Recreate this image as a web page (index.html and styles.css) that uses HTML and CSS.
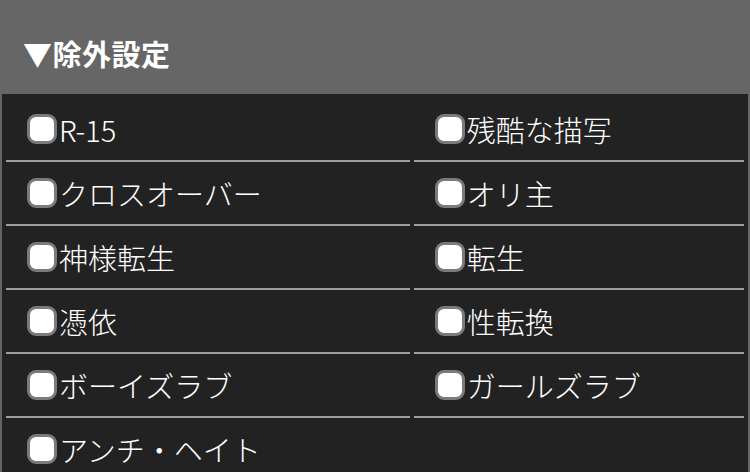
FILE: index.html
```html
<!DOCTYPE html>
<html lang="ja">
<head>
<meta charset="utf-8">
<link rel="stylesheet" href="styles.css">
</head>
<body>
<div class="header">▼除外設定</div>
<div class="panel">
  <label class="row"><input type="checkbox" class="box"><span>R-15</span></label>
  <label class="row"><input type="checkbox" class="box"><span>残酷な描写</span></label>
  <label class="row"><input type="checkbox" class="box"><span>クロスオーバー</span></label>
  <label class="row"><input type="checkbox" class="box"><span>オリ主</span></label>
  <label class="row"><input type="checkbox" class="box"><span>神様転生</span></label>
  <label class="row"><input type="checkbox" class="box"><span>転生</span></label>
  <label class="row"><input type="checkbox" class="box"><span>憑依</span></label>
  <label class="row"><input type="checkbox" class="box"><span>性転換</span></label>
  <label class="row"><input type="checkbox" class="box"><span>ボーイズラブ</span></label>
  <label class="row"><input type="checkbox" class="box"><span>ガールズラブ</span></label>
  <label class="row"><input type="checkbox" class="box"><span>アンチ・ヘイト</span></label>
</div>
</body>
</html>
```
FILE: styles.css
```css
html, body {
  margin: 0;
  padding: 0;
  background: #666666;
  font-family: "Noto Sans CJK JP", "Noto Sans", sans-serif;
  color: #ffffff;
}
.header {
  height: 94px;
  box-sizing: border-box;
  padding: 36px 0 0 23px;
  font-size: 29px;
  font-weight: bold;
  line-height: 34px;
  letter-spacing: 0.5px;
}
.panel {
  margin: 0 2px;
  background: #222222;
  padding: 4px 4px 0;
  display: grid;
  grid-template-columns: 55fr 45fr;
  column-gap: 4px;
  align-content: start;
}
.row {
  height: 62px;
  border-bottom: 2px solid #a0a0a0;
  display: flex;
  align-items: center;
  padding-left: 21px;
  font-size: 29px;
  font-weight: 300;
  line-height: 1;
  gap: 2px;
}
.row:last-child {
  border-bottom: none;
}
.box {
  appearance: none;
  -webkit-appearance: none;
  margin: 0;
  width: 30px;
  height: 30px;
  box-sizing: border-box;
  border: 3px solid #7a7a7a;
  border-radius: 9px;
  background: #ffffff;
  flex: none;
}
```
